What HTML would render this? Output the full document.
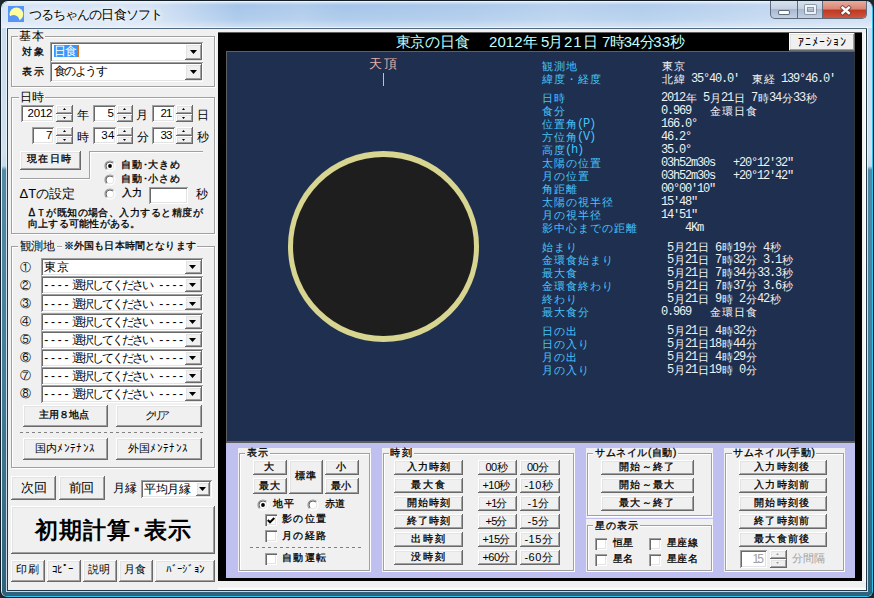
<!DOCTYPE html>
<html lang="ja"><head><meta charset="utf-8"><title>つるちゃんの日食ソフト</title><style>
html,body{margin:0;padding:0}
body{width:874px;height:598px;position:relative;overflow:hidden;background:#1c2a30;font-family:"Liberation Sans",sans-serif;font-size:12px;color:#000}
body>div,body>svg{position:absolute;box-sizing:border-box}
.a{position:absolute}
.t{white-space:nowrap;overflow:visible}
.mono{font-family:"Liberation Mono",monospace;letter-spacing:-1.2px}
.cl{background:#f0f0f0}
.btn{background:#f0f0f0;box-shadow:inset -1px -1px 0 #696969,inset 1px 1px 0 #fff,inset -2px -2px 0 #a0a0a0,inset 2px 2px 0 #e3e3e3}
.sunk{background:#fff;box-shadow:inset 1px 1px 0 #a0a0a0,inset -1px -1px 0 #fff,inset 2px 2px 0 #696969,inset -2px -2px 0 #e3e3e3}
.grp{border:1px solid #a0a0a0;box-shadow:1px 1px 0 #fff,inset 1px 1px 0 #fff}
.dash{background:repeating-linear-gradient(90deg,#808080 0,#808080 3px,transparent 3px,transparent 6px)}
.hl{border-top:1px solid #a0a0a0;border-bottom:1px solid #fff}
.vl{border-left:1px solid #a0a0a0;border-right:1px solid #fff}
.chk{width:12px;height:12px;background:#fff;box-shadow:inset 1px 1px 0 #a0a0a0,inset 2px 2px 0 #696969,inset -1px -1px 0 #fff,inset -2px -2px 0 #e3e3e3}
#frame{left:0;top:0;width:874px;height:598px;border-radius:8px 8px 7px 7px;background:#121e28}
#fhl{left:1px;top:1px;width:872px;height:596px;border-radius:7px 7px 6px 6px;border:1px solid #2ec4ee;border-left-color:#e6eef4;border-top-color:#eef3f9}
#glass{left:2px;top:2px;width:870px;height:594px;border-radius:6px 6px 5px 5px;background:linear-gradient(180deg,#c9dbee 0,#cfdfee 150px,#c6dae8 164px,#5289a6 168px,#437d99 380px,#2f627c 594px)}
#gtitle{left:2px;top:2px;width:870px;height:26px;border-radius:6px 6px 0 0;background:linear-gradient(90deg,rgba(255,255,255,.55) 0,rgba(255,255,255,.5) 150px,rgba(255,255,255,0) 235px,rgba(255,255,255,.1) 300px,rgba(255,255,255,0) 340px,rgba(255,255,255,.08) 470px,rgba(255,255,255,.2) 560px,rgba(255,255,255,.12) 640px,rgba(255,255,255,.3) 760px,rgba(255,255,255,.4) 870px),linear-gradient(180deg,#d4e2f2 0,#a6c5ea 3px,#b1cdec 18px,#d0e0f3 26px)}
#fil{left:6px;top:27px;width:862px;height:565px;border:1px solid rgba(240,248,252,.8)}
#fid{left:7px;top:28px;width:860px;height:563px;background:#203848;border-top:1px solid #52687c}
#cap{left:770px;top:1px;width:97px;height:18px;border:1px solid #5d6b7c;border-top:0;border-radius:0 0 5px 5px;background:linear-gradient(180deg,#d8e2ee 0,#c4d0e0 45%,#a9b9cf 50%,#c2d0e2 100%);overflow:hidden}
.cb{position:absolute;top:0;height:18px;border-right:1px solid #5d6b7c;box-sizing:border-box}
.cb i{position:absolute;background:#fff;box-shadow:0 0 0 1px #5d6b7c;border-radius:1px}
.cx{background:linear-gradient(180deg,#e8ac9e 0,#d98472 45%,#c03822 50%,#cf5a42 100%);border-right:0}
.cx b{position:absolute;left:0;right:0;top:-2px;text-align:center;color:#fff;font-size:16px;font-weight:bold;text-shadow:0 0 2px #333,0 0 1px #000}
</style></head><body>
<svg class="a" width="0" height="0" style="left:0;top:0"><defs><linearGradient id="rg1" x1="0" y1="0" x2="1" y2="1"><stop offset="0" stop-color="#8c8c8c"/><stop offset=".48" stop-color="#a0a0a0"/><stop offset=".52" stop-color="#fff"/><stop offset="1" stop-color="#fff"/></linearGradient><linearGradient id="rg2" x1="0" y1="0" x2="1" y2="1"><stop offset="0" stop-color="#606060"/><stop offset=".48" stop-color="#696969"/><stop offset=".52" stop-color="#e3e3e3"/><stop offset="1" stop-color="#e3e3e3"/></linearGradient></defs></svg>
<div id="frame"></div><div id="fhl"></div><div id="glass"></div><div id="gtitle"></div><div id="fil"></div><div id="fid"></div>
<svg class="a" style="left:8px;top:6px" width="16" height="16" viewBox="0 0 16 16"><rect width="16" height="16" fill="#5694f6"/><circle cx="8.4" cy="8.3" r="6.8" fill="#ffffa0"/><circle cx="5.6" cy="15" r="6" fill="#5694f6"/></svg>
<div class="t" style="left:9.51px;top:5.5px;width:172px;height:17px;line-height:17px;font-size:13px;text-align:center;letter-spacing:-0.98px;text-shadow:0 0 6px #fff,0 0 6px #fff,0 0 10px #fff;">つるちゃんの日食ソフト</div>
<div id="cap"><div class="cb" style="left:0;width:27px"><i style="left:8px;top:10px;width:10px;height:2.5px;"></i></div><div class="cb" style="left:27px;width:25px;"><i style="left:7px;top:4px;width:11px;height:9px;background:none;border:2px solid #fff;box-sizing:border-box;box-shadow:0 0 0 1px #7a8797, inset 0 0 0 1px #7a8797;opacity:.75"></i></div><div class="cb cx" style="left:52px;width:44px"><svg width="44" height="19" viewBox="0 0 44 19" style="position:absolute;left:0;top:-1px"><path d="M19.6 7.6L25.8 13M25.8 7.6L19.6 13" stroke="#5a3a3a" stroke-width="4.2" stroke-linecap="square" opacity=".75"/><path d="M19.6 7.6L25.8 13M25.8 7.6L19.6 13" stroke="#fff" stroke-width="2.4" stroke-linecap="square"/></svg></div></div>
<div class="cl" style="left:8px;top:29px;width:858px;height:561px;"></div>
<div style="left:863px;top:33px;width:3px;height:557px;background:linear-gradient(90deg,#f0f0f0 0,#f0f0f0 1px,#fff 2px)"></div>
<div style="left:218px;top:582px;width:648px;height:8px;background:linear-gradient(180deg,#f0f0f0 0,#f0f0f0 5px,#fff 7px)"></div>
<div class="grp" style="left:11px;top:36px;width:204px;height:51px;"></div>
<div style="left:18px;top:30px;width:27px;height:10px;background:#f0f0f0"></div>
<div class="t" style="left:0.19px;top:27.5px;width:63.3px;height:16px;line-height:16px;font-size:12px;text-align:center;letter-spacing:0.38px;">基本</div>
<div class="t" style="left:3.45px;top:45px;width:60.6px;height:14px;line-height:14px;font-size:10px;text-align:center;letter-spacing:1.5px;-webkit-text-stroke:0.3px;">対象</div>
<div class="t" style="left:3.45px;top:65px;width:60.6px;height:14px;line-height:14px;font-size:10px;text-align:center;letter-spacing:1.5px;-webkit-text-stroke:0.3px;">表示</div>
<div class="sunk" style="left:50px;top:42px;width:153px;height:20px;"></div>
<div class="btn" style="left:185px;top:44px;width:17px;height:16px;"></div>
<svg class="a" style="left:189.5px;top:50.25px" width="7" height="4" viewBox="0 0 7 4"><path d="M0 0H7L3.5 4Z" fill="#000"/></svg>
<div style="left:54px;top:45px;width:24px;height:12px;background:#3399ff"></div>
<div style="left:78px;top:45px;width:1px;height:12px;background:#e07010"></div>
<div class="t" style="left:34.09px;top:43px;width:62.5px;height:16px;line-height:16px;font-size:12px;text-align:center;letter-spacing:-0.42px;color:#fff;">日食</div>
<div class="sunk" style="left:50px;top:62px;width:153px;height:20px;"></div>
<div class="btn" style="left:185px;top:64px;width:17px;height:16px;"></div>
<svg class="a" style="left:189.5px;top:69.95px" width="7" height="4" viewBox="0 0 7 4"><path d="M0 0H7L3.5 4Z" fill="#000"/></svg>
<div class="t" style="left:33.7px;top:63px;width:92.5px;height:16px;line-height:16px;font-size:12px;text-align:center;letter-spacing:-1.61px;">食のようす</div>
<div class="grp" style="left:11px;top:97px;width:204px;height:137px;"></div>
<div style="left:19px;top:92px;width:26px;height:10px;background:#f0f0f0"></div>
<div class="t" style="left:0.34px;top:88.5px;width:62.4px;height:16px;line-height:16px;font-size:12px;text-align:center;letter-spacing:-0.52px;">日時</div>
<div class="sunk" style="left:21px;top:105px;width:33px;height:17px;"></div>
<div class="btn" style="left:56px;top:105px;width:17px;height:9px;"></div>
<div class="btn" style="left:56px;top:114px;width:17px;height:8px;"></div>
<svg class="a" style="left:62.75px;top:108.25px" width="3" height="2" viewBox="0 0 3 2"><path d="M0 2H3L1.5 0Z" fill="#000"/></svg>
<svg class="a" style="left:62.75px;top:116.75px" width="3" height="2" viewBox="0 0 3 2"><path d="M0 0H3L1.5 2Z" fill="#000"/></svg>
<div class="t" style="left:7.99px;top:105.95px;width:63.9px;height:15.5px;line-height:15.5px;font-size:11.5px;text-align:center;letter-spacing:-0.22px;">2012</div>
<div class="sunk" style="left:93px;top:105px;width:23px;height:17px;"></div>
<div class="btn" style="left:117px;top:105px;width:16px;height:9px;"></div>
<div class="btn" style="left:117px;top:114px;width:16px;height:8px;"></div>
<svg class="a" style="left:123.05px;top:108.25px" width="3" height="2" viewBox="0 0 3 2"><path d="M0 2H3L1.5 0Z" fill="#000"/></svg>
<svg class="a" style="left:123.05px;top:116.75px" width="3" height="2" viewBox="0 0 3 2"><path d="M0 0H3L1.5 2Z" fill="#000"/></svg>
<div class="t" style="left:80.75px;top:105.95px;width:60px;height:15.5px;line-height:15.5px;font-size:11.5px;text-align:center;">5</div>
<div class="sunk" style="left:152px;top:105px;width:23px;height:17px;"></div>
<div class="btn" style="left:176px;top:105px;width:17px;height:9px;"></div>
<div class="btn" style="left:176px;top:114px;width:17px;height:8px;"></div>
<svg class="a" style="left:182.45px;top:108.25px" width="3" height="2" viewBox="0 0 3 2"><path d="M0 2H3L1.5 0Z" fill="#000"/></svg>
<svg class="a" style="left:182.45px;top:116.75px" width="3" height="2" viewBox="0 0 3 2"><path d="M0 0H3L1.5 2Z" fill="#000"/></svg>
<div class="t" style="left:136.12px;top:105.95px;width:60px;height:15.5px;line-height:15.5px;font-size:11.5px;text-align:center;letter-spacing:-0.76px;">21</div>
<div class="t" style="left:52.5px;top:106.5px;width:60px;height:16px;line-height:16px;font-size:12px;text-align:center;">年</div>
<div class="t" style="left:112.25px;top:106.5px;width:60px;height:16px;line-height:16px;font-size:12px;text-align:center;">月</div>
<div class="t" style="left:173.05px;top:106.5px;width:60px;height:16px;line-height:16px;font-size:12px;text-align:center;">日</div>
<div class="sunk" style="left:32px;top:127px;width:22px;height:17px;"></div>
<div class="btn" style="left:56px;top:127px;width:17px;height:9px;"></div>
<div class="btn" style="left:56px;top:136px;width:17px;height:8px;"></div>
<svg class="a" style="left:62.75px;top:130.45px" width="3" height="2" viewBox="0 0 3 2"><path d="M0 2H3L1.5 0Z" fill="#000"/></svg>
<svg class="a" style="left:62.75px;top:138.95px" width="3" height="2" viewBox="0 0 3 2"><path d="M0 0H3L1.5 2Z" fill="#000"/></svg>
<div class="t" style="left:19.25px;top:128.15px;width:60px;height:15.5px;line-height:15.5px;font-size:11.5px;text-align:center;">7</div>
<div class="sunk" style="left:93px;top:127px;width:23px;height:17px;"></div>
<div class="btn" style="left:117px;top:127px;width:16px;height:9px;"></div>
<div class="btn" style="left:117px;top:136px;width:16px;height:8px;"></div>
<svg class="a" style="left:123.05px;top:130.45px" width="3" height="2" viewBox="0 0 3 2"><path d="M0 2H3L1.5 0Z" fill="#000"/></svg>
<svg class="a" style="left:123.05px;top:138.95px" width="3" height="2" viewBox="0 0 3 2"><path d="M0 0H3L1.5 2Z" fill="#000"/></svg>
<div class="t" style="left:77.92px;top:128.15px;width:60px;height:15.5px;line-height:15.5px;font-size:11.5px;text-align:center;letter-spacing:0.24px;">34</div>
<div class="sunk" style="left:152px;top:127px;width:23px;height:17px;"></div>
<div class="btn" style="left:176px;top:127px;width:17px;height:9px;"></div>
<div class="btn" style="left:176px;top:136px;width:17px;height:8px;"></div>
<svg class="a" style="left:182.45px;top:130.45px" width="3" height="2" viewBox="0 0 3 2"><path d="M0 2H3L1.5 0Z" fill="#000"/></svg>
<svg class="a" style="left:182.45px;top:138.95px" width="3" height="2" viewBox="0 0 3 2"><path d="M0 0H3L1.5 2Z" fill="#000"/></svg>
<div class="t" style="left:136.12px;top:128.15px;width:60px;height:15.5px;line-height:15.5px;font-size:11.5px;text-align:center;letter-spacing:-0.76px;">33</div>
<div class="t" style="left:52.5px;top:128.7px;width:60px;height:16px;line-height:16px;font-size:12px;text-align:center;">時</div>
<div class="t" style="left:112.5px;top:128.7px;width:60px;height:16px;line-height:16px;font-size:12px;text-align:center;">分</div>
<div class="t" style="left:173.25px;top:128.7px;width:60px;height:16px;line-height:16px;font-size:12px;text-align:center;">秒</div>
<div class="btn" style="left:20px;top:151px;width:61px;height:19px;"></div>
<div class="t" style="left:8.12px;top:151.6px;width:82.8px;height:14px;line-height:14px;font-size:10px;text-align:center;letter-spacing:1.23px;-webkit-text-stroke:0.3px;">現在日時</div>
<div class="hl" style="left:20px;top:178px;width:70px;height:2px;"></div>
<div class="vl" style="left:89px;top:151px;width:2px;height:28px;"></div>
<div class="hl" style="left:90px;top:151px;width:113px;height:2px;"></div>
<svg class="a" style="left:104px;top:160px" width="12" height="12" viewBox="0 0 12 12"><circle cx="6" cy="6" r="5" fill="#fff" stroke="url(#rg1)" stroke-width="1.2"/><circle cx="6" cy="6" r="4" fill="none" stroke="url(#rg2)" stroke-width="1"/><circle cx="6" cy="6" r="1.9" fill="#000"/></svg>
<svg class="a" style="left:104px;top:174px" width="12" height="12" viewBox="0 0 12 12"><circle cx="6" cy="6" r="5" fill="#fff" stroke="url(#rg1)" stroke-width="1.2"/><circle cx="6" cy="6" r="4" fill="none" stroke="url(#rg2)" stroke-width="1"/></svg>
<svg class="a" style="left:104px;top:188px" width="12" height="12" viewBox="0 0 12 12"><circle cx="6" cy="6" r="5" fill="#fff" stroke="url(#rg1)" stroke-width="1.2"/><circle cx="6" cy="6" r="4" fill="none" stroke="url(#rg2)" stroke-width="1"/></svg>
<div class="t" style="left:101.72px;top:158px;width:98.3px;height:14px;line-height:14px;font-size:10px;text-align:center;letter-spacing:0.84px;-webkit-text-stroke:0.3px;">自動･大きめ</div>
<div class="t" style="left:101.72px;top:171.8px;width:98.3px;height:14px;line-height:14px;font-size:10px;text-align:center;letter-spacing:0.84px;-webkit-text-stroke:0.3px;">自動･小さめ</div>
<div class="t" style="left:102.45px;top:185.9px;width:60px;height:14px;line-height:14px;font-size:10px;text-align:center;letter-spacing:0.9px;-webkit-text-stroke:0.3px;">入力</div>
<div class="sunk" style="left:149px;top:187px;width:39px;height:17px;"></div>
<div class="t" style="left:172.3px;top:185.8px;width:60px;height:16px;line-height:16px;font-size:12px;text-align:center;">秒</div>
<div class="t" style="left:0.13px;top:184.5px;width:94.7px;height:17px;line-height:17px;font-size:13px;text-align:center;letter-spacing:0.06px;">ΔTの設定</div>
<div class="t" style="left:9.14px;top:206px;width:213.5px;height:14px;line-height:14px;font-size:10px;text-align:center;letter-spacing:0.48px;-webkit-text-stroke:0.3px;">ΔＴが既知の場合、入力すると精度が</div>
<div class="t" style="left:8.33px;top:217px;width:151.8px;height:14px;line-height:14px;font-size:10px;text-align:center;letter-spacing:0.27px;-webkit-text-stroke:0.3px;">向上する可能性がある。</div>
<div class="grp" style="left:11px;top:246px;width:204px;height:222px;"></div>
<div style="left:18px;top:241px;width:39px;height:10px;background:#f0f0f0"></div>
<div class="t" style="left:0.07px;top:238px;width:74.8px;height:16px;line-height:16px;font-size:12px;text-align:center;letter-spacing:-0.06px;">観測地</div>
<div style="left:62px;top:241px;width:135px;height:11px;background:#f0f0f0"></div>
<div class="t" style="left:44.29px;top:239px;width:171.2px;height:14px;line-height:14px;font-size:10px;text-align:center;letter-spacing:0.17px;-webkit-text-stroke:0.3px;">※外国も日本時間となります</div>
<div class="t" style="left:-4.2px;top:259.6px;width:60px;height:15px;line-height:15px;font-size:11px;text-align:center;">①</div>
<div class="sunk" style="left:41px;top:258px;width:162px;height:18px;"></div>
<div class="btn" style="left:185px;top:260px;width:17px;height:14px;"></div>
<svg class="a" style="left:189.4px;top:265.3px" width="7" height="4" viewBox="0 0 7 4"><path d="M0 0H7L3.5 4Z" fill="#000"/></svg>
<div class="t" style="left:25.19px;top:259.3px;width:63.7px;height:16px;line-height:16px;font-size:12px;text-align:center;letter-spacing:0.78px;">東京</div>
<div class="t" style="left:-4.2px;top:277.7px;width:60px;height:15px;line-height:15px;font-size:11px;text-align:center;">②</div>
<div class="sunk" style="left:41px;top:276px;width:162px;height:18px;"></div>
<div class="btn" style="left:185px;top:278px;width:17px;height:14px;"></div>
<svg class="a" style="left:189.4px;top:283.4px" width="7" height="4" viewBox="0 0 7 4"><path d="M0 0H7L3.5 4Z" fill="#000"/></svg>
<div class="t" style="left:26.18px;top:277.4px;width:63.2px;height:16px;line-height:16px;font-size:12px;text-align:center;letter-spacing:2.77px;">----</div>
<div class="t" style="left:51.97px;top:277.4px;width:120.5px;height:16px;line-height:16px;font-size:12px;text-align:center;letter-spacing:-2.06px;">選択してください</div>
<div class="t" style="left:141.1px;top:277.4px;width:62.7px;height:16px;line-height:16px;font-size:12px;text-align:center;letter-spacing:2.6px;">----</div>
<div class="t" style="left:-4.2px;top:295.8px;width:60px;height:15px;line-height:15px;font-size:11px;text-align:center;">③</div>
<div class="sunk" style="left:41px;top:294px;width:162px;height:18px;"></div>
<div class="btn" style="left:185px;top:296px;width:17px;height:14px;"></div>
<svg class="a" style="left:189.4px;top:301.5px" width="7" height="4" viewBox="0 0 7 4"><path d="M0 0H7L3.5 4Z" fill="#000"/></svg>
<div class="t" style="left:26.18px;top:295.5px;width:63.2px;height:16px;line-height:16px;font-size:12px;text-align:center;letter-spacing:2.77px;">----</div>
<div class="t" style="left:51.97px;top:295.5px;width:120.5px;height:16px;line-height:16px;font-size:12px;text-align:center;letter-spacing:-2.06px;">選択してください</div>
<div class="t" style="left:141.1px;top:295.5px;width:62.7px;height:16px;line-height:16px;font-size:12px;text-align:center;letter-spacing:2.6px;">----</div>
<div class="t" style="left:-4.2px;top:313.9px;width:60px;height:15px;line-height:15px;font-size:11px;text-align:center;">④</div>
<div class="sunk" style="left:41px;top:313px;width:162px;height:18px;"></div>
<div class="btn" style="left:185px;top:315px;width:17px;height:14px;"></div>
<svg class="a" style="left:189.4px;top:319.6px" width="7" height="4" viewBox="0 0 7 4"><path d="M0 0H7L3.5 4Z" fill="#000"/></svg>
<div class="t" style="left:26.18px;top:313.6px;width:63.2px;height:16px;line-height:16px;font-size:12px;text-align:center;letter-spacing:2.77px;">----</div>
<div class="t" style="left:51.97px;top:313.6px;width:120.5px;height:16px;line-height:16px;font-size:12px;text-align:center;letter-spacing:-2.06px;">選択してください</div>
<div class="t" style="left:141.1px;top:313.6px;width:62.7px;height:16px;line-height:16px;font-size:12px;text-align:center;letter-spacing:2.6px;">----</div>
<div class="t" style="left:-4.2px;top:332px;width:60px;height:15px;line-height:15px;font-size:11px;text-align:center;">⑤</div>
<div class="sunk" style="left:41px;top:331px;width:162px;height:18px;"></div>
<div class="btn" style="left:185px;top:333px;width:17px;height:14px;"></div>
<svg class="a" style="left:189.4px;top:337.7px" width="7" height="4" viewBox="0 0 7 4"><path d="M0 0H7L3.5 4Z" fill="#000"/></svg>
<div class="t" style="left:26.18px;top:331.7px;width:63.2px;height:16px;line-height:16px;font-size:12px;text-align:center;letter-spacing:2.77px;">----</div>
<div class="t" style="left:51.97px;top:331.7px;width:120.5px;height:16px;line-height:16px;font-size:12px;text-align:center;letter-spacing:-2.06px;">選択してください</div>
<div class="t" style="left:141.1px;top:331.7px;width:62.7px;height:16px;line-height:16px;font-size:12px;text-align:center;letter-spacing:2.6px;">----</div>
<div class="t" style="left:-4.2px;top:350.1px;width:60px;height:15px;line-height:15px;font-size:11px;text-align:center;">⑥</div>
<div class="sunk" style="left:41px;top:349px;width:162px;height:18px;"></div>
<div class="btn" style="left:185px;top:351px;width:17px;height:14px;"></div>
<svg class="a" style="left:189.4px;top:355.8px" width="7" height="4" viewBox="0 0 7 4"><path d="M0 0H7L3.5 4Z" fill="#000"/></svg>
<div class="t" style="left:26.18px;top:349.8px;width:63.2px;height:16px;line-height:16px;font-size:12px;text-align:center;letter-spacing:2.77px;">----</div>
<div class="t" style="left:51.97px;top:349.8px;width:120.5px;height:16px;line-height:16px;font-size:12px;text-align:center;letter-spacing:-2.06px;">選択してください</div>
<div class="t" style="left:141.1px;top:349.8px;width:62.7px;height:16px;line-height:16px;font-size:12px;text-align:center;letter-spacing:2.6px;">----</div>
<div class="t" style="left:-4.2px;top:368.2px;width:60px;height:15px;line-height:15px;font-size:11px;text-align:center;">⑦</div>
<div class="sunk" style="left:41px;top:367px;width:162px;height:18px;"></div>
<div class="btn" style="left:185px;top:369px;width:17px;height:14px;"></div>
<svg class="a" style="left:189.4px;top:373.9px" width="7" height="4" viewBox="0 0 7 4"><path d="M0 0H7L3.5 4Z" fill="#000"/></svg>
<div class="t" style="left:26.18px;top:367.9px;width:63.2px;height:16px;line-height:16px;font-size:12px;text-align:center;letter-spacing:2.77px;">----</div>
<div class="t" style="left:51.97px;top:367.9px;width:120.5px;height:16px;line-height:16px;font-size:12px;text-align:center;letter-spacing:-2.06px;">選択してください</div>
<div class="t" style="left:141.1px;top:367.9px;width:62.7px;height:16px;line-height:16px;font-size:12px;text-align:center;letter-spacing:2.6px;">----</div>
<div class="t" style="left:-4.2px;top:386.3px;width:60px;height:15px;line-height:15px;font-size:11px;text-align:center;">⑧</div>
<div class="sunk" style="left:41px;top:385px;width:162px;height:18px;"></div>
<div class="btn" style="left:185px;top:387px;width:17px;height:14px;"></div>
<svg class="a" style="left:189.4px;top:392px" width="7" height="4" viewBox="0 0 7 4"><path d="M0 0H7L3.5 4Z" fill="#000"/></svg>
<div class="t" style="left:26.18px;top:386px;width:63.2px;height:16px;line-height:16px;font-size:12px;text-align:center;letter-spacing:2.77px;">----</div>
<div class="t" style="left:51.97px;top:386px;width:120.5px;height:16px;line-height:16px;font-size:12px;text-align:center;letter-spacing:-2.06px;">選択してください</div>
<div class="t" style="left:141.1px;top:386px;width:62.7px;height:16px;line-height:16px;font-size:12px;text-align:center;letter-spacing:2.6px;">----</div>
<div class="btn" style="left:23px;top:405px;width:85px;height:22px;"></div>
<div class="t" style="left:19.06px;top:408px;width:89.6px;height:14px;line-height:14px;font-size:10px;text-align:center;letter-spacing:0.12px;-webkit-text-stroke:0.3px;">主用８地点</div>
<div class="btn" style="left:116px;top:405px;width:86px;height:22px;"></div>
<div class="t" style="left:123.62px;top:407.5px;width:64.5px;height:15px;line-height:15px;font-size:11px;text-align:center;letter-spacing:-3.76px;">クリア</div>
<div class="dash" style="left:20px;top:432px;width:183px;height:1px;"></div>
<div class="btn" style="left:23px;top:438px;width:85px;height:22px;"></div>
<div class="t" style="left:15.29px;top:440.5px;width:99.6px;height:15px;line-height:15px;font-size:11px;text-align:center;letter-spacing:0.37px;">国内ﾒﾝﾃﾅﾝｽ</div>
<div class="btn" style="left:116px;top:438px;width:86px;height:22px;"></div>
<div class="t" style="left:108.19px;top:440.5px;width:99.6px;height:15px;line-height:15px;font-size:11px;text-align:center;letter-spacing:0.37px;">外国ﾒﾝﾃﾅﾝｽ</div>
<div class="btn" style="left:11px;top:476px;width:45px;height:24px;"></div>
<div class="t" style="left:1.34px;top:478.9px;width:64.7px;height:17px;line-height:17px;font-size:13px;text-align:center;letter-spacing:-0.13px;">次回</div>
<div class="btn" style="left:59px;top:476px;width:46px;height:24px;"></div>
<div class="t" style="left:49.49px;top:478.9px;width:63.8px;height:17px;line-height:17px;font-size:13px;text-align:center;letter-spacing:-1.03px;">前回</div>
<div class="t" style="left:93.74px;top:480.4px;width:62.4px;height:16px;line-height:16px;font-size:12px;text-align:center;letter-spacing:-0.52px;">月縁</div>
<div class="sunk" style="left:141px;top:480px;width:71px;height:18px;"></div>
<div class="btn" style="left:196px;top:482px;width:14px;height:14px;"></div>
<svg class="a" style="left:199px;top:486.85px" width="7" height="4" viewBox="0 0 7 4"><path d="M0 0H7L3.5 4Z" fill="#000"/></svg>
<div class="t" style="left:124.26px;top:480.6px;width:86.1px;height:16px;line-height:16px;font-size:12px;text-align:center;letter-spacing:-0.27px;">平均月縁</div>
<div class="btn" style="left:11px;top:506px;width:204px;height:48px;"></div>
<div class="t" style="left:16.23px;top:515.8px;width:194.3px;height:30px;line-height:30px;font-size:22.5px;text-align:center;letter-spacing:1.05px;font-weight:bold;">初期計算･表示</div>
<div class="btn" style="left:11px;top:560px;width:34px;height:22px;"></div>
<div class="t" style="left:-3.26px;top:562.3px;width:61.7px;height:15px;line-height:15px;font-size:11px;text-align:center;letter-spacing:0.69px;">印刷</div>
<div class="btn" style="left:47px;top:560px;width:34px;height:22px;"></div>
<div class="t" style="left:32.7px;top:562.3px;width:60px;height:15px;line-height:15px;font-size:11px;text-align:center;letter-spacing:-1.2px;">ｺﾋﾟｰ</div>
<div class="btn" style="left:83px;top:560px;width:34px;height:22px;"></div>
<div class="t" style="left:68.65px;top:562.3px;width:60.9px;height:15px;line-height:15px;font-size:11px;text-align:center;letter-spacing:-0.11px;">説明</div>
<div class="btn" style="left:119px;top:560px;width:34px;height:22px;"></div>
<div class="t" style="left:104.65px;top:562.3px;width:61.5px;height:15px;line-height:15px;font-size:11px;text-align:center;letter-spacing:0.49px;">月食</div>
<div class="btn" style="left:155px;top:560px;width:60px;height:22px;"></div>
<div class="t" style="left:146.39px;top:562.3px;width:77.3px;height:15px;line-height:15px;font-size:11px;text-align:center;letter-spacing:-0.62px;">ﾊﾞｰｼﾞｮﾝ</div>
<div style="left:218px;top:32px;width:644px;height:549px;background:#000;border-top:1px solid #606060"></div>
<div style="left:226px;top:51px;width:629px;height:391px;background:#1f2f4f;border:1px solid #606060;border-right-color:#303844"></div>
<div style="left:226px;top:441px;width:629px;height:2px;background:#5e5e5e"></div>
<div style="left:226px;top:443px;width:629px;height:135px;background:#c0c0f0"></div>
<div class="t" style="left:376.29px;top:32px;width:112.8px;height:19px;line-height:19px;font-size:15px;text-align:center;letter-spacing:-0.21px;color:#bfffff;">東京の日食</div>
<div class="t" style="left:469.73px;top:32px;width:87.3px;height:19px;line-height:19px;font-size:15px;text-align:center;letter-spacing:0.07px;color:#bfffff;">2012年</div>
<div class="t" style="left:520.9px;top:32px;width:60.2px;height:19px;line-height:19px;font-size:15px;text-align:center;letter-spacing:-1.79px;color:#bfffff;">5月</div>
<div class="t" style="left:545.12px;top:32px;width:72.4px;height:19px;line-height:19px;font-size:15px;text-align:center;letter-spacing:1.03px;color:#bfffff;">21日</div>
<div class="t" style="left:582.4px;top:32px;width:61.2px;height:19px;line-height:19px;font-size:15px;text-align:center;letter-spacing:-0.79px;color:#bfffff;">7時</div>
<div class="t" style="left:604.29px;top:32px;width:69.5px;height:19px;line-height:19px;font-size:15px;text-align:center;letter-spacing:-0.42px;color:#bfffff;">34分</div>
<div class="t" style="left:633.99px;top:32px;width:70.3px;height:19px;line-height:19px;font-size:15px;text-align:center;letter-spacing:-0.02px;color:#bfffff;">33秒</div>
<div class="btn" style="left:789px;top:33px;width:66px;height:18px;"></div>
<div class="t" style="left:779.07px;top:34px;width:86.6px;height:16px;line-height:16px;font-size:12px;text-align:center;letter-spacing:0.95px;">ｱﾆﾒｰｼｮﾝ</div>
<div class="t" style="left:350.49px;top:55.1px;width:66.6px;height:17px;line-height:17px;font-size:13px;text-align:center;letter-spacing:1.77px;color:#e8b0a8;">天頂</div>
<div style="left:383px;top:73px;width:1px;height:13px;background:#e8b0a8"></div>
<div class="a" style="left:287.7px;top:151px;width:191.3px;height:190.7px;border-radius:50%;background:#d8d590"></div>
<div class="a" style="left:293.2px;top:156.6px;width:181.1px;height:179.2px;border-radius:50%;background:#1e1e1e"></div>
<div class="t" style="left:541.7px;top:58.6px;height:15px;line-height:15px;font-size:11px;letter-spacing:1px;color:#46c4fc;">観測地</div>
<div class="t" style="left:661.7px;top:58.6px;height:15px;line-height:15px;font-size:11px;letter-spacing:1px;color:#f2f2f2;">東京</div>
<div class="t" style="left:541.7px;top:71.6px;height:15px;line-height:15px;font-size:11px;letter-spacing:1px;color:#46c4fc;">緯度・経度</div>
<div class="t" style="left:661.7px;top:71.6px;height:15px;line-height:15px;font-size:11px;letter-spacing:1px;color:#f2f2f2;">北緯</div>
<div class="t mono" style="left:691px;top:71.1px;height:16px;line-height:16px;font-size:12px;color:#f2f2f2;">35°40.0′</div>
<div class="t" style="left:751.7px;top:71.6px;height:15px;line-height:15px;font-size:11px;letter-spacing:1px;color:#f2f2f2;">東経</div>
<div class="t mono" style="left:781px;top:71.1px;height:16px;line-height:16px;font-size:12px;color:#f2f2f2;">139°46.0′</div>
<div class="t" style="left:541.7px;top:90.9px;height:15px;line-height:15px;font-size:11px;letter-spacing:1px;color:#46c4fc;">日時</div>
<div class="t mono" style="left:661px;top:90.4px;height:16px;line-height:16px;font-size:12px;color:#f2f2f2;">2012</div>
<div class="t" style="left:685.7px;top:90.9px;height:15px;line-height:15px;font-size:11px;letter-spacing:1px;color:#f2f2f2;">年</div>
<div class="t mono" style="left:703px;top:90.4px;height:16px;line-height:16px;font-size:12px;color:#f2f2f2;">5</div>
<div class="t" style="left:709.7px;top:90.9px;height:15px;line-height:15px;font-size:11px;letter-spacing:1px;color:#f2f2f2;">月</div>
<div class="t mono" style="left:721px;top:90.4px;height:16px;line-height:16px;font-size:12px;color:#f2f2f2;">21</div>
<div class="t" style="left:733.7px;top:90.9px;height:15px;line-height:15px;font-size:11px;letter-spacing:1px;color:#f2f2f2;">日</div>
<div class="t mono" style="left:751px;top:90.4px;height:16px;line-height:16px;font-size:12px;color:#f2f2f2;">7</div>
<div class="t" style="left:757.7px;top:90.9px;height:15px;line-height:15px;font-size:11px;letter-spacing:1px;color:#f2f2f2;">時</div>
<div class="t mono" style="left:769px;top:90.4px;height:16px;line-height:16px;font-size:12px;color:#f2f2f2;">34</div>
<div class="t" style="left:781.7px;top:90.9px;height:15px;line-height:15px;font-size:11px;letter-spacing:1px;color:#f2f2f2;">分</div>
<div class="t mono" style="left:793px;top:90.4px;height:16px;line-height:16px;font-size:12px;color:#f2f2f2;">33</div>
<div class="t" style="left:805.7px;top:90.9px;height:15px;line-height:15px;font-size:11px;letter-spacing:1px;color:#f2f2f2;">秒</div>
<div class="t" style="left:541.7px;top:103.9px;height:15px;line-height:15px;font-size:11px;letter-spacing:1px;color:#46c4fc;">食分</div>
<div class="t mono" style="left:661px;top:103.4px;height:16px;line-height:16px;font-size:12px;color:#f2f2f2;">0.969</div>
<div class="t" style="left:709.7px;top:103.9px;height:15px;line-height:15px;font-size:11px;letter-spacing:1px;color:#f2f2f2;">金環日食</div>
<div class="t" style="left:541.7px;top:116.9px;height:15px;line-height:15px;font-size:11px;letter-spacing:1px;color:#46c4fc;">位置角</div>
<div class="t mono" style="left:577px;top:116.4px;height:16px;line-height:16px;font-size:12px;color:#46c4fc;">(P)</div>
<div class="t mono" style="left:661px;top:116.4px;height:16px;line-height:16px;font-size:12px;color:#f2f2f2;">166.0°</div>
<div class="t" style="left:541.7px;top:129.7px;height:15px;line-height:15px;font-size:11px;letter-spacing:1px;color:#46c4fc;">方位角</div>
<div class="t mono" style="left:577px;top:129.2px;height:16px;line-height:16px;font-size:12px;color:#46c4fc;">(V)</div>
<div class="t mono" style="left:661px;top:129.2px;height:16px;line-height:16px;font-size:12px;color:#f2f2f2;">46.2°</div>
<div class="t" style="left:541.7px;top:142.6px;height:15px;line-height:15px;font-size:11px;letter-spacing:1px;color:#46c4fc;">高度</div>
<div class="t mono" style="left:565px;top:142.1px;height:16px;line-height:16px;font-size:12px;color:#46c4fc;">(h)</div>
<div class="t mono" style="left:661px;top:142.1px;height:16px;line-height:16px;font-size:12px;color:#f2f2f2;">35.0°</div>
<div class="t" style="left:541.7px;top:155.7px;height:15px;line-height:15px;font-size:11px;letter-spacing:1px;color:#46c4fc;">太陽の位置</div>
<div class="t mono" style="left:661px;top:155.2px;height:16px;line-height:16px;font-size:12px;color:#f2f2f2;">03h52m30s</div>
<div class="t mono" style="left:733px;top:155.2px;height:16px;line-height:16px;font-size:12px;color:#f2f2f2;">+20°12′32″</div>
<div class="t" style="left:541.7px;top:168.7px;height:15px;line-height:15px;font-size:11px;letter-spacing:1px;color:#46c4fc;">月の位置</div>
<div class="t mono" style="left:661px;top:168.2px;height:16px;line-height:16px;font-size:12px;color:#f2f2f2;">03h52m30s</div>
<div class="t mono" style="left:733px;top:168.2px;height:16px;line-height:16px;font-size:12px;color:#f2f2f2;">+20°12′42″</div>
<div class="t" style="left:541.7px;top:181.7px;height:15px;line-height:15px;font-size:11px;letter-spacing:1px;color:#46c4fc;">角距離</div>
<div class="t mono" style="left:661px;top:181.2px;height:16px;line-height:16px;font-size:12px;color:#f2f2f2;">00°00′10″</div>
<div class="t" style="left:541.7px;top:194.6px;height:15px;line-height:15px;font-size:11px;letter-spacing:1px;color:#46c4fc;">太陽の視半径</div>
<div class="t mono" style="left:661px;top:194.1px;height:16px;line-height:16px;font-size:12px;color:#f2f2f2;">15′48″</div>
<div class="t" style="left:541.7px;top:207.6px;height:15px;line-height:15px;font-size:11px;letter-spacing:1px;color:#46c4fc;">月の視半径</div>
<div class="t mono" style="left:661px;top:207.1px;height:16px;line-height:16px;font-size:12px;color:#f2f2f2;">14′51″</div>
<div class="t" style="left:541.7px;top:220.7px;height:15px;line-height:15px;font-size:11px;letter-spacing:1px;color:#46c4fc;">影中心までの距離</div>
<div class="t mono" style="left:685px;top:220.2px;height:16px;line-height:16px;font-size:12px;color:#f2f2f2;">4Km</div>
<div class="t" style="left:541.7px;top:240.1px;height:15px;line-height:15px;font-size:11px;letter-spacing:1px;color:#46c4fc;">始まり</div>
<div class="t mono" style="left:667px;top:239.6px;height:16px;line-height:16px;font-size:12px;color:#f2f2f2;">5</div>
<div class="t" style="left:673.7px;top:240.1px;height:15px;line-height:15px;font-size:11px;letter-spacing:1px;color:#f2f2f2;">月</div>
<div class="t mono" style="left:685px;top:239.6px;height:16px;line-height:16px;font-size:12px;color:#f2f2f2;">21</div>
<div class="t" style="left:697.7px;top:240.1px;height:15px;line-height:15px;font-size:11px;letter-spacing:1px;color:#f2f2f2;">日</div>
<div class="t mono" style="left:715px;top:239.6px;height:16px;line-height:16px;font-size:12px;color:#f2f2f2;">6</div>
<div class="t" style="left:721.7px;top:240.1px;height:15px;line-height:15px;font-size:11px;letter-spacing:1px;color:#f2f2f2;">時</div>
<div class="t mono" style="left:733px;top:239.6px;height:16px;line-height:16px;font-size:12px;color:#f2f2f2;">19</div>
<div class="t" style="left:745.7px;top:240.1px;height:15px;line-height:15px;font-size:11px;letter-spacing:1px;color:#f2f2f2;">分</div>
<div class="t mono" style="left:763px;top:239.6px;height:16px;line-height:16px;font-size:12px;color:#f2f2f2;">4</div>
<div class="t" style="left:769.7px;top:240.1px;height:15px;line-height:15px;font-size:11px;letter-spacing:1px;color:#f2f2f2;">秒</div>
<div class="t" style="left:541.7px;top:252.9px;height:15px;line-height:15px;font-size:11px;letter-spacing:1px;color:#46c4fc;">金環食始まり</div>
<div class="t mono" style="left:667px;top:252.4px;height:16px;line-height:16px;font-size:12px;color:#f2f2f2;">5</div>
<div class="t" style="left:673.7px;top:252.9px;height:15px;line-height:15px;font-size:11px;letter-spacing:1px;color:#f2f2f2;">月</div>
<div class="t mono" style="left:685px;top:252.4px;height:16px;line-height:16px;font-size:12px;color:#f2f2f2;">21</div>
<div class="t" style="left:697.7px;top:252.9px;height:15px;line-height:15px;font-size:11px;letter-spacing:1px;color:#f2f2f2;">日</div>
<div class="t mono" style="left:715px;top:252.4px;height:16px;line-height:16px;font-size:12px;color:#f2f2f2;">7</div>
<div class="t" style="left:721.7px;top:252.9px;height:15px;line-height:15px;font-size:11px;letter-spacing:1px;color:#f2f2f2;">時</div>
<div class="t mono" style="left:733px;top:252.4px;height:16px;line-height:16px;font-size:12px;color:#f2f2f2;">32</div>
<div class="t" style="left:745.7px;top:252.9px;height:15px;line-height:15px;font-size:11px;letter-spacing:1px;color:#f2f2f2;">分</div>
<div class="t mono" style="left:763px;top:252.4px;height:16px;line-height:16px;font-size:12px;color:#f2f2f2;">3.1</div>
<div class="t" style="left:781.7px;top:252.9px;height:15px;line-height:15px;font-size:11px;letter-spacing:1px;color:#f2f2f2;">秒</div>
<div class="t" style="left:541.7px;top:265.7px;height:15px;line-height:15px;font-size:11px;letter-spacing:1px;color:#46c4fc;">最大食</div>
<div class="t mono" style="left:667px;top:265.2px;height:16px;line-height:16px;font-size:12px;color:#f2f2f2;">5</div>
<div class="t" style="left:673.7px;top:265.7px;height:15px;line-height:15px;font-size:11px;letter-spacing:1px;color:#f2f2f2;">月</div>
<div class="t mono" style="left:685px;top:265.2px;height:16px;line-height:16px;font-size:12px;color:#f2f2f2;">21</div>
<div class="t" style="left:697.7px;top:265.7px;height:15px;line-height:15px;font-size:11px;letter-spacing:1px;color:#f2f2f2;">日</div>
<div class="t mono" style="left:715px;top:265.2px;height:16px;line-height:16px;font-size:12px;color:#f2f2f2;">7</div>
<div class="t" style="left:721.7px;top:265.7px;height:15px;line-height:15px;font-size:11px;letter-spacing:1px;color:#f2f2f2;">時</div>
<div class="t mono" style="left:733px;top:265.2px;height:16px;line-height:16px;font-size:12px;color:#f2f2f2;">34</div>
<div class="t" style="left:745.7px;top:265.7px;height:15px;line-height:15px;font-size:11px;letter-spacing:1px;color:#f2f2f2;">分</div>
<div class="t mono" style="left:757px;top:265.2px;height:16px;line-height:16px;font-size:12px;color:#f2f2f2;">33.3</div>
<div class="t" style="left:781.7px;top:265.7px;height:15px;line-height:15px;font-size:11px;letter-spacing:1px;color:#f2f2f2;">秒</div>
<div class="t" style="left:541.7px;top:278.5px;height:15px;line-height:15px;font-size:11px;letter-spacing:1px;color:#46c4fc;">金環食終わり</div>
<div class="t mono" style="left:667px;top:278px;height:16px;line-height:16px;font-size:12px;color:#f2f2f2;">5</div>
<div class="t" style="left:673.7px;top:278.5px;height:15px;line-height:15px;font-size:11px;letter-spacing:1px;color:#f2f2f2;">月</div>
<div class="t mono" style="left:685px;top:278px;height:16px;line-height:16px;font-size:12px;color:#f2f2f2;">21</div>
<div class="t" style="left:697.7px;top:278.5px;height:15px;line-height:15px;font-size:11px;letter-spacing:1px;color:#f2f2f2;">日</div>
<div class="t mono" style="left:715px;top:278px;height:16px;line-height:16px;font-size:12px;color:#f2f2f2;">7</div>
<div class="t" style="left:721.7px;top:278.5px;height:15px;line-height:15px;font-size:11px;letter-spacing:1px;color:#f2f2f2;">時</div>
<div class="t mono" style="left:733px;top:278px;height:16px;line-height:16px;font-size:12px;color:#f2f2f2;">37</div>
<div class="t" style="left:745.7px;top:278.5px;height:15px;line-height:15px;font-size:11px;letter-spacing:1px;color:#f2f2f2;">分</div>
<div class="t mono" style="left:763px;top:278px;height:16px;line-height:16px;font-size:12px;color:#f2f2f2;">3.6</div>
<div class="t" style="left:781.7px;top:278.5px;height:15px;line-height:15px;font-size:11px;letter-spacing:1px;color:#f2f2f2;">秒</div>
<div class="t" style="left:541.7px;top:291.5px;height:15px;line-height:15px;font-size:11px;letter-spacing:1px;color:#46c4fc;">終わり</div>
<div class="t mono" style="left:667px;top:291px;height:16px;line-height:16px;font-size:12px;color:#f2f2f2;">5</div>
<div class="t" style="left:673.7px;top:291.5px;height:15px;line-height:15px;font-size:11px;letter-spacing:1px;color:#f2f2f2;">月</div>
<div class="t mono" style="left:685px;top:291px;height:16px;line-height:16px;font-size:12px;color:#f2f2f2;">21</div>
<div class="t" style="left:697.7px;top:291.5px;height:15px;line-height:15px;font-size:11px;letter-spacing:1px;color:#f2f2f2;">日</div>
<div class="t mono" style="left:715px;top:291px;height:16px;line-height:16px;font-size:12px;color:#f2f2f2;">9</div>
<div class="t" style="left:721.7px;top:291.5px;height:15px;line-height:15px;font-size:11px;letter-spacing:1px;color:#f2f2f2;">時</div>
<div class="t mono" style="left:739px;top:291px;height:16px;line-height:16px;font-size:12px;color:#f2f2f2;">2</div>
<div class="t" style="left:745.7px;top:291.5px;height:15px;line-height:15px;font-size:11px;letter-spacing:1px;color:#f2f2f2;">分</div>
<div class="t mono" style="left:757px;top:291px;height:16px;line-height:16px;font-size:12px;color:#f2f2f2;">42</div>
<div class="t" style="left:769.7px;top:291.5px;height:15px;line-height:15px;font-size:11px;letter-spacing:1px;color:#f2f2f2;">秒</div>
<div class="t" style="left:541.7px;top:304.7px;height:15px;line-height:15px;font-size:11px;letter-spacing:1px;color:#46c4fc;">最大食分</div>
<div class="t mono" style="left:661px;top:304.2px;height:16px;line-height:16px;font-size:12px;color:#f2f2f2;">0.969</div>
<div class="t" style="left:709.7px;top:304.7px;height:15px;line-height:15px;font-size:11px;letter-spacing:1px;color:#f2f2f2;">金環日食</div>
<div class="t" style="left:541.7px;top:323.5px;height:15px;line-height:15px;font-size:11px;letter-spacing:1px;color:#46c4fc;">日の出</div>
<div class="t mono" style="left:667px;top:323px;height:16px;line-height:16px;font-size:12px;color:#f2f2f2;">5</div>
<div class="t" style="left:673.7px;top:323.5px;height:15px;line-height:15px;font-size:11px;letter-spacing:1px;color:#f2f2f2;">月</div>
<div class="t mono" style="left:685px;top:323px;height:16px;line-height:16px;font-size:12px;color:#f2f2f2;">21</div>
<div class="t" style="left:697.7px;top:323.5px;height:15px;line-height:15px;font-size:11px;letter-spacing:1px;color:#f2f2f2;">日</div>
<div class="t mono" style="left:715px;top:323px;height:16px;line-height:16px;font-size:12px;color:#f2f2f2;">4</div>
<div class="t" style="left:721.7px;top:323.5px;height:15px;line-height:15px;font-size:11px;letter-spacing:1px;color:#f2f2f2;">時</div>
<div class="t mono" style="left:733px;top:323px;height:16px;line-height:16px;font-size:12px;color:#f2f2f2;">32</div>
<div class="t" style="left:745.7px;top:323.5px;height:15px;line-height:15px;font-size:11px;letter-spacing:1px;color:#f2f2f2;">分</div>
<div class="t" style="left:541.7px;top:336.6px;height:15px;line-height:15px;font-size:11px;letter-spacing:1px;color:#46c4fc;">日の入り</div>
<div class="t mono" style="left:667px;top:336.1px;height:16px;line-height:16px;font-size:12px;color:#f2f2f2;">5</div>
<div class="t" style="left:673.7px;top:336.6px;height:15px;line-height:15px;font-size:11px;letter-spacing:1px;color:#f2f2f2;">月</div>
<div class="t mono" style="left:685px;top:336.1px;height:16px;line-height:16px;font-size:12px;color:#f2f2f2;">21</div>
<div class="t" style="left:697.7px;top:336.6px;height:15px;line-height:15px;font-size:11px;letter-spacing:1px;color:#f2f2f2;">日</div>
<div class="t mono" style="left:709px;top:336.1px;height:16px;line-height:16px;font-size:12px;color:#f2f2f2;">18</div>
<div class="t" style="left:721.7px;top:336.6px;height:15px;line-height:15px;font-size:11px;letter-spacing:1px;color:#f2f2f2;">時</div>
<div class="t mono" style="left:733px;top:336.1px;height:16px;line-height:16px;font-size:12px;color:#f2f2f2;">44</div>
<div class="t" style="left:745.7px;top:336.6px;height:15px;line-height:15px;font-size:11px;letter-spacing:1px;color:#f2f2f2;">分</div>
<div class="t" style="left:541.7px;top:349.7px;height:15px;line-height:15px;font-size:11px;letter-spacing:1px;color:#46c4fc;">月の出</div>
<div class="t mono" style="left:667px;top:349.2px;height:16px;line-height:16px;font-size:12px;color:#f2f2f2;">5</div>
<div class="t" style="left:673.7px;top:349.7px;height:15px;line-height:15px;font-size:11px;letter-spacing:1px;color:#f2f2f2;">月</div>
<div class="t mono" style="left:685px;top:349.2px;height:16px;line-height:16px;font-size:12px;color:#f2f2f2;">21</div>
<div class="t" style="left:697.7px;top:349.7px;height:15px;line-height:15px;font-size:11px;letter-spacing:1px;color:#f2f2f2;">日</div>
<div class="t mono" style="left:715px;top:349.2px;height:16px;line-height:16px;font-size:12px;color:#f2f2f2;">4</div>
<div class="t" style="left:721.7px;top:349.7px;height:15px;line-height:15px;font-size:11px;letter-spacing:1px;color:#f2f2f2;">時</div>
<div class="t mono" style="left:733px;top:349.2px;height:16px;line-height:16px;font-size:12px;color:#f2f2f2;">29</div>
<div class="t" style="left:745.7px;top:349.7px;height:15px;line-height:15px;font-size:11px;letter-spacing:1px;color:#f2f2f2;">分</div>
<div class="t" style="left:541.7px;top:362.7px;height:15px;line-height:15px;font-size:11px;letter-spacing:1px;color:#46c4fc;">月の入り</div>
<div class="t mono" style="left:667px;top:362.2px;height:16px;line-height:16px;font-size:12px;color:#f2f2f2;">5</div>
<div class="t" style="left:673.7px;top:362.7px;height:15px;line-height:15px;font-size:11px;letter-spacing:1px;color:#f2f2f2;">月</div>
<div class="t mono" style="left:685px;top:362.2px;height:16px;line-height:16px;font-size:12px;color:#f2f2f2;">21</div>
<div class="t" style="left:697.7px;top:362.7px;height:15px;line-height:15px;font-size:11px;letter-spacing:1px;color:#f2f2f2;">日</div>
<div class="t mono" style="left:709px;top:362.2px;height:16px;line-height:16px;font-size:12px;color:#f2f2f2;">19</div>
<div class="t" style="left:721.7px;top:362.7px;height:15px;line-height:15px;font-size:11px;letter-spacing:1px;color:#f2f2f2;">時</div>
<div class="t mono" style="left:739px;top:362.2px;height:16px;line-height:16px;font-size:12px;color:#f2f2f2;">0</div>
<div class="t" style="left:745.7px;top:362.7px;height:15px;line-height:15px;font-size:11px;letter-spacing:1px;color:#f2f2f2;">分</div>
<div style="left:238px;top:448px;width:133px;height:124px;background:#f0f0f0"></div>
<div class="grp" style="left:239px;top:453px;width:131px;height:118px;"></div>
<div style="left:245px;top:448px;width:25px;height:10px;background:#f0f0f0"></div>
<div class="t" style="left:227.75px;top:446px;width:60.4px;height:14px;line-height:14px;font-size:10px;text-align:center;letter-spacing:1.3px;-webkit-text-stroke:0.3px;">表示</div>
<div class="btn" style="left:253px;top:460px;width:34px;height:15px;"></div>
<div class="t" style="left:239px;top:460.2px;width:60px;height:14px;line-height:14px;font-size:10px;text-align:center;-webkit-text-stroke:0.3px;">大</div>
<div class="btn" style="left:253px;top:478px;width:34px;height:16px;"></div>
<div class="t" style="left:239.65px;top:478.6px;width:60px;height:14px;line-height:14px;font-size:10px;text-align:center;letter-spacing:0.8px;-webkit-text-stroke:0.3px;">最大</div>
<div class="btn" style="left:289px;top:460px;width:34px;height:34px;"></div>
<div class="t" style="left:275.85px;top:468.8px;width:60.8px;height:14px;line-height:14px;font-size:10px;text-align:center;letter-spacing:1.7px;-webkit-text-stroke:0.3px;">標準</div>
<div class="btn" style="left:325px;top:460px;width:34px;height:15px;"></div>
<div class="t" style="left:310.5px;top:460.2px;width:60px;height:14px;line-height:14px;font-size:10px;text-align:center;-webkit-text-stroke:0.3px;">小</div>
<div class="btn" style="left:325px;top:478px;width:34px;height:16px;"></div>
<div class="t" style="left:311.45px;top:478.6px;width:60px;height:14px;line-height:14px;font-size:10px;text-align:center;letter-spacing:0.9px;-webkit-text-stroke:0.3px;">最小</div>
<svg class="a" style="left:257px;top:499px" width="12" height="12" viewBox="0 0 12 12"><circle cx="6" cy="6" r="5" fill="#fff" stroke="url(#rg1)" stroke-width="1.2"/><circle cx="6" cy="6" r="4" fill="none" stroke="url(#rg2)" stroke-width="1"/><circle cx="6" cy="6" r="1.9" fill="#000"/></svg>
<div class="t" style="left:254.05px;top:497.3px;width:60.4px;height:14px;line-height:14px;font-size:10px;text-align:center;letter-spacing:1.3px;-webkit-text-stroke:0.3px;">地平</div>
<svg class="a" style="left:307px;top:499px" width="12" height="12" viewBox="0 0 12 12"><circle cx="6" cy="6" r="5" fill="#fff" stroke="url(#rg1)" stroke-width="1.2"/><circle cx="6" cy="6" r="4" fill="none" stroke="url(#rg2)" stroke-width="1"/></svg>
<div class="t" style="left:305.45px;top:497.3px;width:60px;height:14px;line-height:14px;font-size:10px;text-align:center;letter-spacing:0.9px;-webkit-text-stroke:0.3px;">赤道</div>
<div class="chk" style="left:265.2px;top:514px"><svg width="12" height="12" viewBox="0 0 12 12" style="position:absolute;left:0;top:0"><path d="M2.8 6 L5 8.3 L9.3 4" stroke="#000" stroke-width="2" fill="none"/></svg></div>
<div class="t" style="left:263.32px;top:512.2px;width:82.8px;height:14px;line-height:14px;font-size:10px;text-align:center;letter-spacing:1.23px;-webkit-text-stroke:0.3px;">影の位置</div>
<div class="chk" style="left:265.2px;top:530px"></div>
<div class="t" style="left:263.32px;top:528.6px;width:82.8px;height:14px;line-height:14px;font-size:10px;text-align:center;letter-spacing:1.23px;-webkit-text-stroke:0.3px;">月の経路</div>
<div class="dash" style="left:250px;top:547px;width:111px;height:1px;"></div>
<div class="chk" style="left:265.2px;top:553px"></div>
<div class="t" style="left:263.32px;top:551px;width:82.8px;height:14px;line-height:14px;font-size:10px;text-align:center;letter-spacing:1.23px;-webkit-text-stroke:0.3px;">自動運転</div>
<div style="left:382px;top:448px;width:193px;height:124px;background:#f0f0f0"></div>
<div class="grp" style="left:383px;top:453px;width:191px;height:118px;"></div>
<div style="left:389px;top:448px;width:25px;height:10px;background:#f0f0f0"></div>
<div class="t" style="left:371.5px;top:446px;width:60.9px;height:14px;line-height:14px;font-size:10px;text-align:center;letter-spacing:1.8px;-webkit-text-stroke:0.3px;">時刻</div>
<div class="btn" style="left:394px;top:460px;width:69px;height:15px;"></div>
<div class="t" style="left:387.9px;top:460.1px;width:82.1px;height:14px;line-height:14px;font-size:10px;text-align:center;letter-spacing:1px;-webkit-text-stroke:0.3px;">入力時刻</div>
<div class="btn" style="left:478px;top:460px;width:39px;height:15px;"></div>
<div class="t" style="left:465.71px;top:459.6px;width:61.1px;height:15px;line-height:15px;font-size:11px;text-align:center;letter-spacing:-0.58px;">00秒</div>
<div class="btn" style="left:520px;top:460px;width:40px;height:15px;"></div>
<div class="t" style="left:507.26px;top:459.6px;width:60.9px;height:15px;line-height:15px;font-size:11px;text-align:center;letter-spacing:-0.68px;">00分</div>
<div class="btn" style="left:394px;top:478px;width:69px;height:15px;"></div>
<div class="t" style="left:392.4px;top:478.12px;width:72.7px;height:14px;line-height:14px;font-size:10px;text-align:center;letter-spacing:1.8px;-webkit-text-stroke:0.3px;">最大食</div>
<div class="btn" style="left:478px;top:478px;width:39px;height:15px;"></div>
<div class="t" style="left:462.72px;top:477.62px;width:67px;height:15px;line-height:15px;font-size:11px;text-align:center;letter-spacing:-0.56px;">+10秒</div>
<div class="btn" style="left:520px;top:478px;width:40px;height:15px;"></div>
<div class="t" style="left:505.23px;top:477.62px;width:67.3px;height:15px;line-height:15px;font-size:11px;text-align:center;letter-spacing:0.46px;">-10秒</div>
<div class="btn" style="left:394px;top:496px;width:69px;height:15px;"></div>
<div class="t" style="left:387.9px;top:496.14px;width:82.1px;height:14px;line-height:14px;font-size:10px;text-align:center;letter-spacing:1px;-webkit-text-stroke:0.3px;">開始時刻</div>
<div class="btn" style="left:478px;top:496px;width:39px;height:15px;"></div>
<div class="t" style="left:465.61px;top:495.64px;width:61px;height:15px;line-height:15px;font-size:11px;text-align:center;letter-spacing:-0.78px;">+1分</div>
<div class="btn" style="left:520px;top:496px;width:40px;height:15px;"></div>
<div class="t" style="left:508.3px;top:495.64px;width:61px;height:15px;line-height:15px;font-size:11px;text-align:center;letter-spacing:0.6px;">-1分</div>
<div class="btn" style="left:394px;top:514px;width:69px;height:15px;"></div>
<div class="t" style="left:387.9px;top:514.16px;width:82.1px;height:14px;line-height:14px;font-size:10px;text-align:center;letter-spacing:1px;-webkit-text-stroke:0.3px;">終了時刻</div>
<div class="btn" style="left:478px;top:514px;width:39px;height:15px;"></div>
<div class="t" style="left:465.61px;top:513.66px;width:61px;height:15px;line-height:15px;font-size:11px;text-align:center;letter-spacing:-0.78px;">+5分</div>
<div class="btn" style="left:520px;top:514px;width:40px;height:15px;"></div>
<div class="t" style="left:508.3px;top:513.66px;width:61px;height:15px;line-height:15px;font-size:11px;text-align:center;letter-spacing:0.6px;">-5分</div>
<div class="btn" style="left:394px;top:532px;width:69px;height:15px;"></div>
<div class="t" style="left:392.4px;top:532.18px;width:72.7px;height:14px;line-height:14px;font-size:10px;text-align:center;letter-spacing:1.8px;-webkit-text-stroke:0.3px;">出時刻</div>
<div class="btn" style="left:478px;top:532px;width:39px;height:15px;"></div>
<div class="t" style="left:462.72px;top:531.68px;width:67px;height:15px;line-height:15px;font-size:11px;text-align:center;letter-spacing:-0.56px;">+15分</div>
<div class="btn" style="left:520px;top:532px;width:40px;height:15px;"></div>
<div class="t" style="left:505.23px;top:531.68px;width:67.3px;height:15px;line-height:15px;font-size:11px;text-align:center;letter-spacing:0.46px;">-15分</div>
<div class="btn" style="left:394px;top:550px;width:69px;height:15px;"></div>
<div class="t" style="left:392.4px;top:550.2px;width:72.7px;height:14px;line-height:14px;font-size:10px;text-align:center;letter-spacing:1.8px;-webkit-text-stroke:0.3px;">没時刻</div>
<div class="btn" style="left:478px;top:550px;width:39px;height:15px;"></div>
<div class="t" style="left:462.72px;top:549.7px;width:67px;height:15px;line-height:15px;font-size:11px;text-align:center;letter-spacing:-0.56px;">+60分</div>
<div class="btn" style="left:520px;top:550px;width:40px;height:15px;"></div>
<div class="t" style="left:505.23px;top:549.7px;width:67.3px;height:15px;line-height:15px;font-size:11px;text-align:center;letter-spacing:0.46px;">-60分</div>
<div style="left:586px;top:448px;width:127px;height:70px;background:#f0f0f0"></div>
<div class="grp" style="left:587px;top:453px;width:125px;height:63px;"></div>
<div style="left:593px;top:448px;width:85px;height:10px;background:#f0f0f0"></div>
<div class="t" style="left:575.7px;top:446px;width:120.6px;height:14px;line-height:14px;font-size:10px;text-align:center;letter-spacing:0.6px;-webkit-text-stroke:0.3px;">サムネイル(自動)</div>
<div class="btn" style="left:601px;top:460px;width:93px;height:15px;"></div>
<div class="t" style="left:600.09px;top:460.1px;width:94.6px;height:14px;line-height:14px;font-size:10px;text-align:center;letter-spacing:1.38px;-webkit-text-stroke:0.3px;">開始～終了</div>
<div class="btn" style="left:601px;top:478px;width:93px;height:15px;"></div>
<div class="t" style="left:600.09px;top:478.12px;width:94.6px;height:14px;line-height:14px;font-size:10px;text-align:center;letter-spacing:1.38px;-webkit-text-stroke:0.3px;">開始～最大</div>
<div class="btn" style="left:601px;top:496px;width:93px;height:15px;"></div>
<div class="t" style="left:600.09px;top:496.14px;width:94.6px;height:14px;line-height:14px;font-size:10px;text-align:center;letter-spacing:1.38px;-webkit-text-stroke:0.3px;">最大～終了</div>
<div style="left:586px;top:519px;width:127px;height:53px;background:#f0f0f0"></div>
<div class="grp" style="left:587px;top:525px;width:125px;height:46px;"></div>
<div style="left:593px;top:521px;width:47px;height:10px;background:#f0f0f0"></div>
<div class="t" style="left:575.98px;top:518.6px;width:82.6px;height:14px;line-height:14px;font-size:10px;text-align:center;letter-spacing:1.17px;-webkit-text-stroke:0.3px;">星の表示</div>
<div class="chk" style="left:595.2px;top:538px"></div>
<div class="t" style="left:593.15px;top:536px;width:60px;height:14px;line-height:14px;font-size:10px;text-align:center;letter-spacing:0.6px;-webkit-text-stroke:0.3px;">恒星</div>
<div class="chk" style="left:649.3px;top:538px"></div>
<div class="t" style="left:647.48px;top:536px;width:71px;height:14px;line-height:14px;font-size:10px;text-align:center;letter-spacing:0.95px;-webkit-text-stroke:0.3px;">星座線</div>
<div class="chk" style="left:595.2px;top:554px"></div>
<div class="t" style="left:593.15px;top:552.2px;width:60px;height:14px;line-height:14px;font-size:10px;text-align:center;letter-spacing:0.6px;-webkit-text-stroke:0.3px;">星名</div>
<div class="chk" style="left:649.3px;top:554px"></div>
<div class="t" style="left:647.48px;top:552.2px;width:71px;height:14px;line-height:14px;font-size:10px;text-align:center;letter-spacing:0.95px;-webkit-text-stroke:0.3px;">星座名</div>
<div style="left:724px;top:448px;width:121px;height:124px;background:#f0f0f0"></div>
<div class="grp" style="left:725px;top:453px;width:119px;height:118px;"></div>
<div style="left:732px;top:448px;width:84px;height:10px;background:#f0f0f0"></div>
<div class="t" style="left:713.91px;top:446px;width:120.7px;height:14px;line-height:14px;font-size:10px;text-align:center;letter-spacing:0.62px;-webkit-text-stroke:0.3px;">サムネイル(手動)</div>
<div class="btn" style="left:739px;top:460px;width:88px;height:15px;"></div>
<div class="t" style="left:735.2px;top:460.1px;width:93.9px;height:14px;line-height:14px;font-size:10px;text-align:center;letter-spacing:1.2px;-webkit-text-stroke:0.3px;">入力時刻後</div>
<div class="btn" style="left:739px;top:478px;width:88px;height:15px;"></div>
<div class="t" style="left:735.2px;top:478.12px;width:93.9px;height:14px;line-height:14px;font-size:10px;text-align:center;letter-spacing:1.2px;-webkit-text-stroke:0.3px;">入力時刻前</div>
<div class="btn" style="left:739px;top:496px;width:88px;height:15px;"></div>
<div class="t" style="left:735.2px;top:496.14px;width:93.9px;height:14px;line-height:14px;font-size:10px;text-align:center;letter-spacing:1.2px;-webkit-text-stroke:0.3px;">開始時刻後</div>
<div class="btn" style="left:739px;top:514px;width:88px;height:15px;"></div>
<div class="t" style="left:735.2px;top:514.16px;width:93.9px;height:14px;line-height:14px;font-size:10px;text-align:center;letter-spacing:1.2px;-webkit-text-stroke:0.3px;">終了時刻前</div>
<div class="btn" style="left:739px;top:532px;width:88px;height:15px;"></div>
<div class="t" style="left:735.2px;top:532.18px;width:93.9px;height:14px;line-height:14px;font-size:10px;text-align:center;letter-spacing:1.2px;-webkit-text-stroke:0.3px;">最大食前後</div>
<div class="sunk" style="left:740px;top:550px;width:27px;height:18px;"></div>
<div class="t" style="left:727.36px;top:551px;width:60px;height:16px;line-height:16px;font-size:12px;text-align:center;letter-spacing:-1.78px;color:#a0a0a0;">15</div>
<div class="btn" style="left:770px;top:550px;width:17px;height:9px;"></div>
<div class="btn" style="left:770px;top:559px;width:17px;height:9px;"></div>
<svg class="a" style="left:776.4px;top:553.4px" width="3" height="2" viewBox="0 0 3 2"><path d="M0 2H3L1.5 0Z" fill="#a0a0a0"/></svg>
<svg class="a" style="left:776.4px;top:562.2px" width="3" height="2" viewBox="0 0 3 2"><path d="M0 0H3L1.5 2Z" fill="#a0a0a0"/></svg>
<div class="t" style="left:772.69px;top:550.75px;width:71.6px;height:14.5px;line-height:14.5px;font-size:10.5px;text-align:center;letter-spacing:-0.23px;color:#a0a0a0;">分間隔</div>
</body></html>
